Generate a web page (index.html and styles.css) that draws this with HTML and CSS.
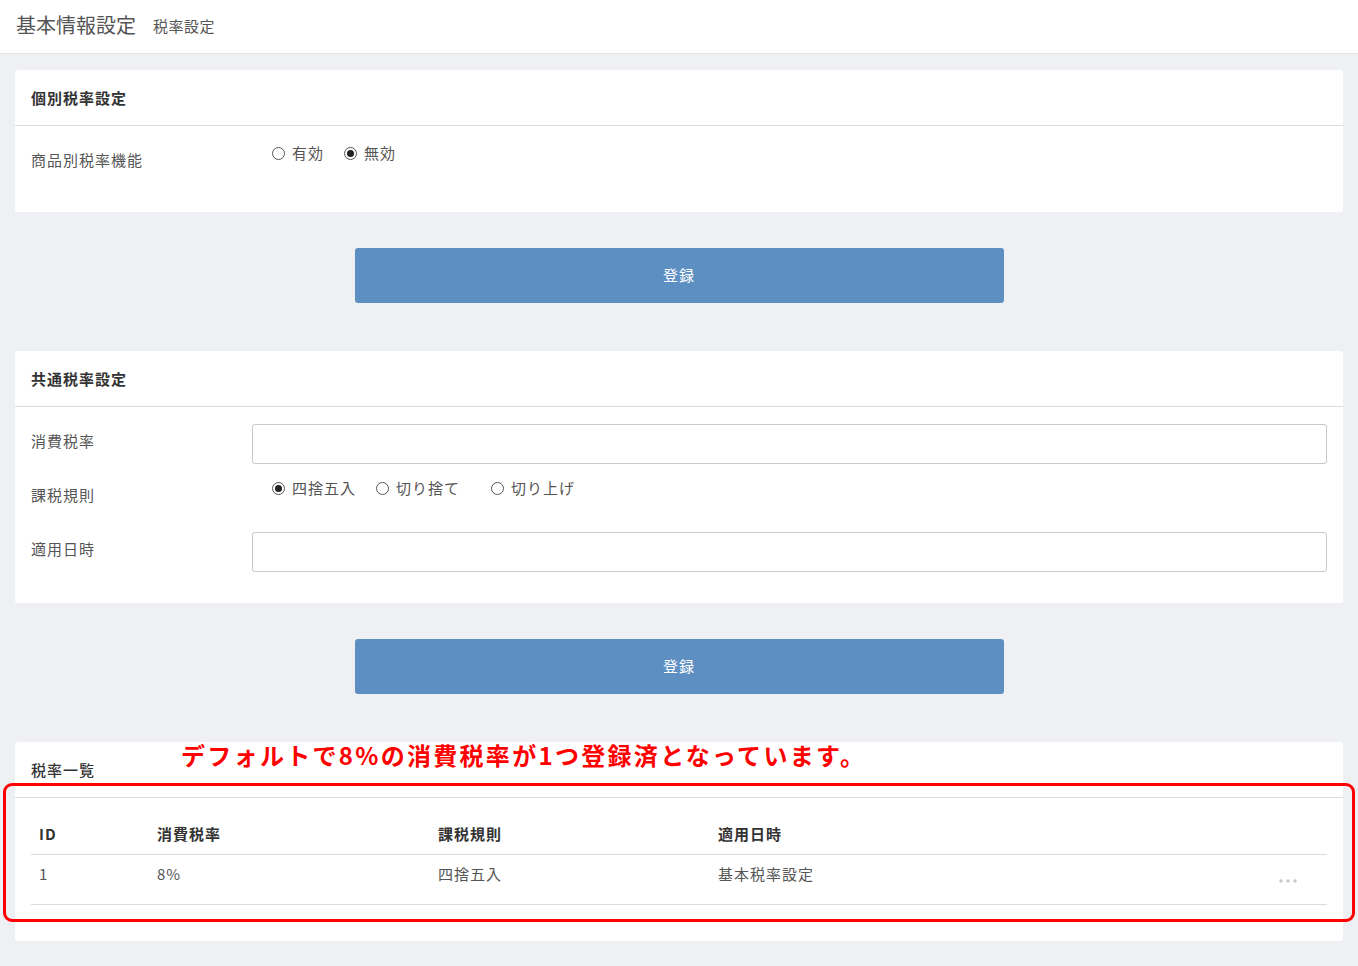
FILE: index.html
```html
<!DOCTYPE html>
<html lang="ja">
<head>
<meta charset="utf-8">
<title>税率設定</title>
<link rel="stylesheet" href="styles.css">
</head>
<body>
<header class="page-header">
  <h1 class="page-title">基本情報設定</h1>
  <span class="page-subtitle">税率設定</span>
</header>
<main class="content">
  <section class="card">
    <div class="card-header">個別税率設定</div>
    <div class="card-body card-body--short">
      <div class="form-row">
        <div class="form-label">商品別税率機能</div>
        <div class="radio-group">
          <span class="radio"><span class="radio-circle"></span>有効</span>
          <span class="radio"><span class="radio-circle is-checked"></span>無効</span>
        </div>
      </div>
    </div>
  </section>
  <div class="actions"><button class="btn-primary">登録</button></div>

  <section class="card">
    <div class="card-header">共通税率設定</div>
    <div class="card-body">
      <div class="form-row">
        <div class="form-label">消費税率</div>
        <div class="form-control"></div>
      </div>
      <div class="form-row">
        <div class="form-label">課税規則</div>
        <div class="radio-group">
          <span class="radio"><span class="radio-circle is-checked"></span>四捨五入</span>
          <span class="radio radio--wide"><span class="radio-circle"></span>切り捨て</span>
          <span class="radio"><span class="radio-circle"></span>切り上げ</span>
        </div>
      </div>
      <div class="form-row">
        <div class="form-label">適用日時</div>
        <div class="form-control"></div>
      </div>
    </div>
  </section>
  <div class="actions"><button class="btn-primary">登録</button></div>

  <section class="card card--list">
    <div class="card-header card-header--plain">税率一覧</div>
    <div class="card-body card-body--table">
      <table class="rate-table">
        <thead>
          <tr>
            <th class="col-id">ID</th>
            <th class="col-rate">消費税率</th>
            <th class="col-rule">課税規則</th>
            <th class="col-date">適用日時</th>
            <th class="col-menu"></th>
          </tr>
        </thead>
        <tbody>
          <tr>
            <td>1</td>
            <td>8%</td>
            <td>四捨五入</td>
            <td>基本税率設定</td>
            <td class="menu-cell">
              <svg class="dots" width="18" height="4" viewBox="0 0 18 4"><circle cx="2" cy="2" r="1.7"/><circle cx="9" cy="2" r="1.7"/><circle cx="16" cy="2" r="1.7"/></svg>
            </td>
          </tr>
        </tbody>
      </table>
    </div>
    <div class="annotation-text">デフォルトで8%の消費税率が1つ登録済となっています。</div>
    <div class="annotation-box"></div>
  </section>
</main>
</body>
</html>
```

FILE: styles.css
```css
* { box-sizing: border-box; }
html, body { margin: 0; padding: 0; }
body {
  background: #eff0f4;
  font-family: "Noto Sans CJK JP", "Noto Sans", sans-serif;
  color: #555;
  font-size: 15px;
  letter-spacing: 1px;
  width: 1358px;
  min-height: 966px;
}
.page-header {
  height: 54px;
  background: #fff;
  border-bottom: 1px solid #e2e3e6;
  display: flex;
  align-items: center;
  padding: 0 16px 4px;
  gap: 17px;
}
.page-title {
  margin: 0;
  font-size: 20px;
  font-weight: 400;
  letter-spacing: 0;
  color: #555;
  line-height: 28px;
}
.page-subtitle {
  font-size: 15px;
  letter-spacing: 0.5px;
  color: #555;
  padding-top: 2px;
}
.content {
  padding: 16px 15px 25px;
}
.card {
  background: #fff;
  border-radius: 3px;
}
.card-header {
  height: 56px;
  padding: 0 16px;
  display: flex;
  align-items: center;
  font-weight: 700;
  color: #333;
  border-bottom: 1px solid #d8dddd;
}
.card-header--plain {
  font-weight: 500;
  padding-top: 0;
}
.card-body {
  padding: 17px 16px 31px;
  display: flex;
  flex-direction: column;
  gap: 14px;
}
.card-body--short { padding-bottom: 29px; }
.form-row {
  display: flex;
  height: 40px;
}
.form-label {
  width: 221px;
  flex: none;
  display: flex;
  align-items: center;
  padding-bottom: 8px;
  color: #555;
}
.form-control {
  flex: 1;
  height: 40px;
  border: 1px solid #c8c9cc;
  border-radius: 3px;
}
.radio-group {
  display: flex;
  align-items: flex-start;
  padding-left: 20px;
  margin-top: -1px;
  gap: 20px;
  line-height: 22px;
}
.radio {
  display: inline-flex;
  align-items: center;
  gap: 7px;
  color: #555;
}
.radio--wide { margin-right: 11px; }
.radio-circle {
  width: 13px;
  height: 13px;
  border: 1px solid #555;
  border-radius: 50%;
  display: inline-flex;
  align-items: center;
  justify-content: center;
  flex: none;
}
.radio-circle.is-checked::after {
  content: "";
  width: 7px;
  height: 7px;
  border-radius: 50%;
  background: #222;
}
.actions {
  display: flex;
  justify-content: center;
  padding: 36px 0 48px;
}
.btn-primary {
  width: 649px;
  height: 55px;
  padding: 0 0 3px;
  background: #5d8fc3;
  border: none;
  border-radius: 3px;
  color: #fff;
  font-family: inherit;
  font-size: 15px;
  letter-spacing: 1px;
}
.card--list {
  position: relative;
}
.card-body--table {
  padding: 16px 16px 36px;
  display: block;
}
.rate-table {
  width: 100%;
  border-collapse: collapse;
  text-align: left;
}
.rate-table th {
  height: 40px;
  padding: 0 8px 0;
  font-weight: 700;
  color: #333;
  border-bottom: 1px solid #dcdcdc;
}
.rate-table td {
  height: 50px;
  padding: 0 8px 12px;
  color: #555;
  border-bottom: 1px solid #dcdcdc;
}
.col-id { width: 118px; }
.col-rate { width: 281px; }
.col-rule { width: 280px; }
.col-date { width: 537px; }
.rate-table td.menu-cell {
  padding: 4px 0 0 32px;
}
.dots { fill: #c4c6cc; display: block; }
.annotation-text {
  position: absolute;
  left: 166px;
  top: -2px;
  line-height: 30px;
  font-size: 24px;
  font-weight: 700;
  letter-spacing: 2.3px;
  color: #ff0000;
  white-space: nowrap;
}
.annotation-box {
  position: absolute;
  left: -12px;
  top: 41px;
  width: 1352px;
  height: 139px;
  border: 3px solid #ff0000;
  border-radius: 9px;
}
```
